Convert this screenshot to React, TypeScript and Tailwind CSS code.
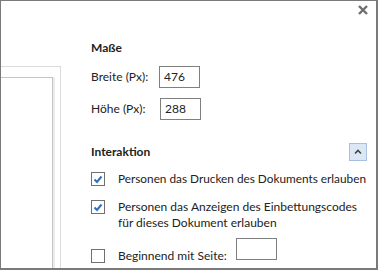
import React from "react";

function Checkbox({ checked }: { checked?: boolean }) {
  return (
    <div className="w-[14px] h-[14px] border border-[#707070] bg-white flex items-center justify-center shrink-0">
      {checked && (
        <svg width="10" height="9" viewBox="0 0 10 9">
          <path d="M1.5 4.5 L4 7 L8.5 1.5" fill="none" stroke="#2f6fb8" strokeWidth="2" />
        </svg>
      )}
    </div>
  );
}

export default function App() {
  return (
    <div
      className="relative w-[378px] h-[270px] overflow-hidden bg-white flex border-l border-t border-r-2 border-b-2 border-[#7a7a7a] text-[12px] text-[#222]"
      style={{ fontFamily: "Lato, 'Noto Sans', sans-serif" }}
    >
      {/* close */}
      <svg className="absolute right-[8px] top-[4px]" width="10" height="10" viewBox="0 0 10 10">
        <path d="M1 1 L9 9 M9 1 L1 9" stroke="#6e6e6e" strokeWidth="2.4" />
      </svg>

      {/* preview panel */}
      <div className="w-[60px] mt-[65px] border-t border-r border-[#dcdcdc] shrink-0">
        <div className="mt-[10px] w-[52px] h-full border-t border-r border-[#c4c4c4] shadow-[2px_0_0_#ececec]" />
      </div>

      {/* settings */}
      <div className="flex-1 min-w-0 pl-[30px] pr-[9px] pt-[39px] whitespace-nowrap">
        <div className="font-bold leading-[16px]">Maße</div>

        <div className="flex items-center mt-[10px] h-[22px]">
          <span className="w-[68px]">Breite (Px):</span>
          <div className="w-[41px] h-[22px] border border-[#808080] pl-[4px] leading-[20px]">476</div>
        </div>
        <div className="flex items-center mt-[10px] h-[22px]">
          <span className="w-[69px]">Höhe (Px):</span>
          <div className="w-[41px] h-[22px] border border-[#808080] pl-[4px] leading-[20px]">288</div>
        </div>

        <div className="flex items-center justify-between mt-[23px] h-[18px]">
          <span className="font-bold">Interaktion</span>
          <div className="w-[18px] h-[18px] bg-[#dce7f5] border border-[#a7c0e0] flex items-center justify-center">
            <svg width="8" height="6" viewBox="0 0 8 6">
              <path d="M1 4.5 L4 1.5 L7 4.5" fill="none" stroke="#444" strokeWidth="1.6" />
            </svg>
          </div>
        </div>

        <div className="flex items-start mt-[11px]">
          <Checkbox checked />
          <span className="ml-[13px] leading-[16px] -mt-[1px] text-[11.8px]">Personen das Drucken des Dokuments erlauben</span>
        </div>
        <div className="flex items-start mt-[13px]">
          <Checkbox checked />
          <span className="ml-[13px] leading-[16px] -mt-[1px]">
            Personen das Anzeigen des Einbettungscodes
            <br />
            für dieses Dokument erlauben
          </span>
        </div>
        <div className="flex items-start mt-[18px]">
          <Checkbox />
          <span className="ml-[13px] leading-[16px] -mt-[1px]">Beginnend mit Seite:</span>
          <div className="ml-[9px] -mt-[11px] w-[41px] h-[22px] border border-[#808080]" />
        </div>
      </div>
    </div>
  );
}
